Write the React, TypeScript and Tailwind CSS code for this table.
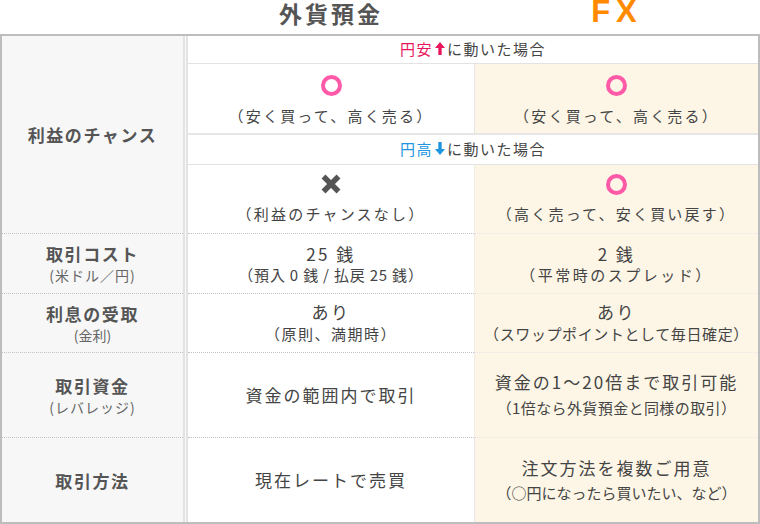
import React from 'react';

const jp = "font-['Noto_Sans_CJK_JP','Noto_Sans',sans-serif]";

const Ring = () => (
  <span className="block w-[21px] h-[21px] rounded-full border-[4px] border-[#ff5aa8]" />
);

const Cross = () => (
  <svg width="22" height="22" viewBox="0 0 22 22">
    <path d="M3.5 3.5L18.5 18.5M18.5 3.5L3.5 18.5" stroke="#555" strokeWidth="5.5" />
  </svg>
);

const ArrowUp = ({ color }: { color: string }) => (
  <svg width="10" height="13" viewBox="0 0 10 13" className="inline-block mx-[2px] -mt-[2px]">
    <polygon points="5,0 10,6 6.7,6 6.7,13 3.3,13 3.3,6 0,6" fill={color} />
  </svg>
);

const ArrowDown = ({ color }: { color: string }) => (
  <svg width="10" height="13" viewBox="0 0 10 13" className="inline-block mx-[2px] -mt-[2px]">
    <polygon points="5,13 10,7 6.7,7 6.7,0 3.3,0 3.3,7 0,7" fill={color} />
  </svg>
);

const dotted = 'border-b border-dotted border-[#c2c2c2]';
const cream = 'bg-[#fdf6e6] border-l border-[#e6e6e6]';

const Label = ({ main, sub, subTrack = 'tracking-[1px]', className = '' }: { main: string; sub?: string; subTrack?: string; className?: string }) => (
  <div className={`col-start-1 bg-[#f7f7f7] flex flex-col items-center justify-center ${className}`}>
    <span className="text-[17px] leading-[23px] font-bold text-[#555] tracking-[1.6px]">{main}</span>
    {sub && <span className={`text-[14px] leading-[20px] text-[#666] ${subTrack}`}>{sub}</span>}
  </div>
);

export default function App() {
  return (
    <div className={`w-[760px] h-[524px] bg-white text-[#444] ${jp}`}>
      {/* titles */}
      <div className="flex h-[34px] items-start">
        <div className="w-[188px]" />
        <div className="w-[286px] text-center text-[23px] leading-[26px] font-bold text-[#555] tracking-[3px]">外貨預金</div>
        <div className="w-[286px] text-center text-[31px] leading-[24px] font-bold text-[#ff8a00] tracking-[6px] font-['Liberation_Sans',Arial,sans-serif]">FX</div>
      </div>

      <div className="w-[760px] border-2 border-[#bdbdbd] grid grid-cols-[181px_5px_286px_284px] grid-rows-[28px_71px_30px_69px_60px_59px_85px_84px]">
        {/* label column */}
        <Label main="利益のチャンス" className={`row-start-1 row-span-4 ${dotted}`} />
        <Label main="取引コスト" sub="(米ドル／円)" className={`row-start-5 ${dotted}`} />
        <Label main="利息の受取" sub="(金利)" subTrack="tracking-[0px]" className={`row-start-6 ${dotted}`} />
        <Label main="取引資金" sub="(レバレッジ)" className={`row-start-7 ${dotted}`} />
        <Label main="取引方法" className="row-start-8" />

        {/* separator */}
        <div className="col-start-2 row-start-1 row-span-8 border-x-2 border-[#e3e3e3] bg-[#fafafa]" />

        {/* 円安 */}
        <div className="col-start-3 col-span-2 row-start-1 flex items-center justify-center border-b border-[#e3e3e3] text-[15px] tracking-[1.5px]">
          <span className="text-[#e8175d]">円安</span>
          <ArrowUp color="#e8175d" />
          <span>に動いた場合</span>
        </div>
        <div className="col-start-3 row-start-2 flex flex-col items-center pt-[10px] gap-[10px] border-b-2 border-[#e6e6e6]">
          <div className="h-[22px] flex items-center"><Ring /></div>
          <span className="text-[15px] leading-[20px] tracking-[2.2px]">（安く買って、高く売る）</span>
        </div>
        <div className={`col-start-4 row-start-2 flex flex-col items-center pt-[10px] gap-[10px] border-b-2 border-b-[#e6e6e6] ${cream}`}>
          <div className="h-[22px] flex items-center"><Ring /></div>
          <span className="text-[15px] leading-[20px] tracking-[2.2px]">（安く買って、高く売る）</span>
        </div>

        {/* 円高 */}
        <div className="col-start-3 col-span-2 row-start-3 flex items-center justify-center border-b border-[#e3e3e3] text-[15px] tracking-[1.5px]">
          <span className="text-[#2196e0]">円高</span>
          <ArrowDown color="#2196e0" />
          <span>に動いた場合</span>
        </div>
        <div className={`col-start-3 row-start-4 flex flex-col items-center pt-[8px] gap-[9px] ${dotted}`}>
          <div className="h-[22px] flex items-center"><Cross /></div>
          <span className="text-[15px] leading-[20px] tracking-[2.2px]">（利益のチャンスなし）</span>
        </div>
        <div className={`col-start-4 row-start-4 flex flex-col items-center pt-[8px] gap-[9px] ${cream} ${dotted}`}>
          <div className="h-[22px] flex items-center"><Ring /></div>
          <span className="text-[15px] leading-[20px] tracking-[2.2px]">（高く売って、安く買い戻す）</span>
        </div>

        {/* 取引コスト */}
        <div className={`col-start-3 row-start-5 flex flex-col items-center justify-center ${dotted}`}>
          <span className="text-[17px] leading-[21px] tracking-[2.5px]">25 銭</span>
          <span className="text-[15px] leading-[21px] tracking-[0.8px]">（預入 0 銭 / 払戻 25 銭）</span>
        </div>
        <div className={`col-start-4 row-start-5 flex flex-col items-center justify-center ${cream} ${dotted}`}>
          <span className="text-[17px] leading-[21px] tracking-[2.5px]">2 銭</span>
          <span className="text-[15px] leading-[21px] tracking-[2.5px]">（平常時のスプレッド）</span>
        </div>

        {/* 利息の受取 */}
        <div className={`col-start-3 row-start-6 flex flex-col items-center justify-center ${dotted}`}>
          <span className="text-[17px] leading-[22px] tracking-[2.5px]">あり</span>
          <span className="text-[15px] leading-[22px] tracking-[1.5px]">（原則、満期時）</span>
        </div>
        <div className={`col-start-4 row-start-6 flex flex-col items-center justify-center ${cream} ${dotted}`}>
          <span className="text-[17px] leading-[22px] tracking-[2.5px]">あり</span>
          <span className="text-[15px] leading-[22px] tracking-[0.6px]">（スワップポイントとして毎日確定）</span>
        </div>

        {/* 取引資金 */}
        <div className={`col-start-3 row-start-7 flex items-center justify-center ${dotted}`}>
          <span className="text-[17px] tracking-[2px]">資金の範囲内で取引</span>
        </div>
        <div className={`col-start-4 row-start-7 flex flex-col items-center justify-center ${cream} ${dotted}`}>
          <span className="text-[17px] leading-[26px] tracking-[2px]">資金の1〜20倍まで取引可能</span>
          <span className="text-[15px] leading-[26px] tracking-[0.4px]">（1倍なら外貨預金と同様の取引）</span>
        </div>

        {/* 取引方法 */}
        <div className="col-start-3 row-start-8 flex items-center justify-center">
          <span className="text-[17px] tracking-[2px]">現在レートで売買</span>
        </div>
        <div className={`col-start-4 row-start-8 flex flex-col items-center justify-center ${cream}`}>
          <span className="text-[17px] leading-[25px] tracking-[2px]">注文方法を複数ご用意</span>
          <span className="text-[15px] leading-[25px] tracking-[0px]">（○円になったら買いたい、など）</span>
        </div>
      </div>
    </div>
  );
}
